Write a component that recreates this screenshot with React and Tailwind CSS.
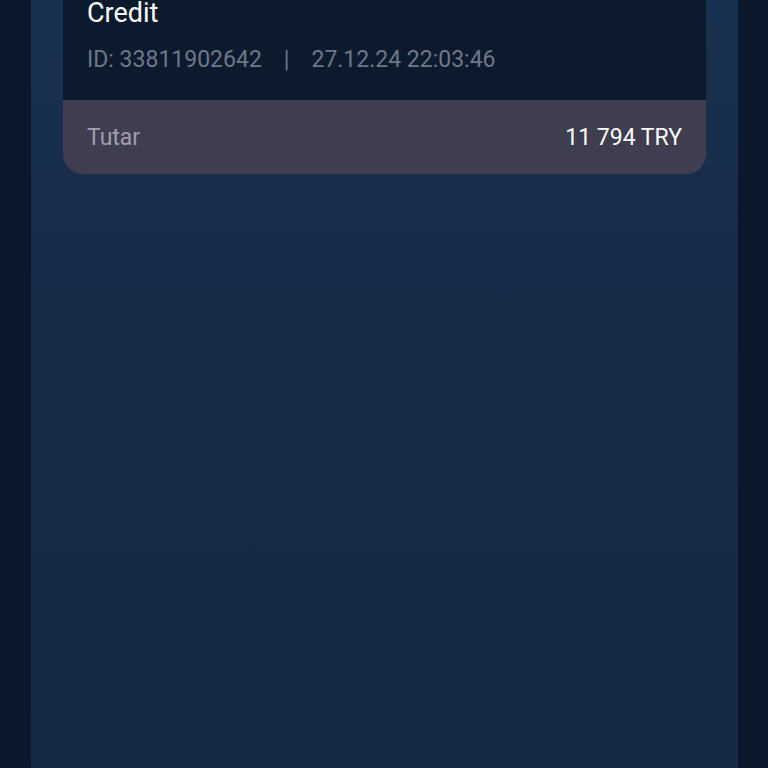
export default function App() {
  return (
    <main
      className="h-[768px] w-[768px] overflow-hidden bg-[#0b182b] flex"
      style={{ fontFamily: "Roboto, 'Liberation Sans', sans-serif" }}
    >
      <div className="w-[31px] shrink-0 bg-[#0b182b]" />
      <div className="flex-1 px-[32px] bg-gradient-to-b from-[#18304f] via-[#172a48] to-[#162946]">
        <div className="-mt-[30px] rounded-b-[20px] overflow-hidden">
          <div className="bg-[#0c1a2e] px-6 pt-[30px] pb-[25px]">
            <div className="text-[27px] leading-[26px] text-white">Credit</div>
            <div className="mt-[19px] text-[23px] leading-[30px] text-[#6c788a] flex gap-[22px]">
              <span>ID: 33811902642</span>
              <span>|</span>
              <span>27.12.24 22:03:46</span>
            </div>
          </div>
          <div className="bg-[#3f3d50] h-[74px] px-6 flex items-center justify-between pt-[2px]">
            <span className="text-[23px] text-[#a09eab]">Tutar</span>
            <span className="text-[23px] text-white">11 794 TRY</span>
          </div>
        </div>
      </div>
      <div className="w-[30px] shrink-0 bg-[#0b182b]" />
    </main>
  );
}
